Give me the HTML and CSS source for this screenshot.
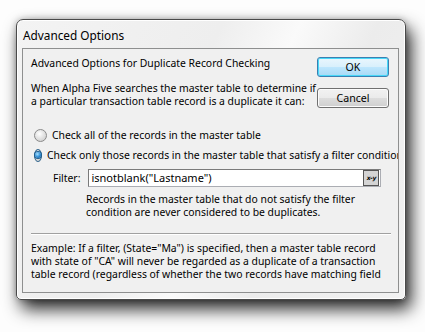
FILE: index.html
```html
<!DOCTYPE html>
<html lang="en">
  <head>
    <meta charset="UTF-8" />
    <title>Advanced Options</title>
    <link rel="stylesheet" href="styles.css">
  </head>
  <body>
    <div class="window">
      <div class="titlebar">Advanced Options</div>
      <div class="panel">
        <div class="top">
          <div class="intro">
            <p class="heading">Advanced Options for Duplicate Record Checking</p>
            <p class="para">When Alpha Five searches the master table to determine if<br>a particular transaction table record is a duplicate it can:</p>
          </div>
          <div class="buttons">
            <button class="btn default">OK</button>
            <button class="btn">Cancel</button>
          </div>
        </div>

        <div class="options">
          <label class="radio-row"><span class="radio"></span>Check all of the records in the master table</label>
          <label class="radio-row"><span class="radio checked"></span>Check only those records in the master table that satisfy a filter condition</label>
        </div>

        <div class="filter-row">
          <span class="filter-label">Filter:</span>
          <div class="filter-box">
            <span class="filter-text">isnotblank("Lastname")</span>
            <span class="xy-btn">x-y</span>
          </div>
        </div>

        <p class="note">Records in the master table that do not satisfy the filter<br>condition are never considered to be duplicates.</p>

        <div class="sep"></div>

        <p class="example">Example: If a filter, (State="Ma") is specified, then a master table record<br>with state of "CA" will never be regarded as a duplicate of a transaction<br>table record (regardless of whether the two records have matching field</p>
      </div>
    </div>
  </body>
</html>
```

FILE: styles.css
```css
html {
  height: 100%;
}

body {
  margin: 0;
  min-height: 100%;
  padding-top: 19px;
  box-sizing: border-box;
  background: #fdfdfd;
  font-family: "Noto Sans", "Open Sans", sans-serif;
  font-size: 10.4px;
  color: #000;
}

p {
  margin: 0;
}

.window {
  margin-left: 16px;
  width: 388px;
  height: 279px;
  border: 1px solid #4a4a4a;
  border-radius: 7px 7px 5px 5px;
  background: linear-gradient(115deg, #f3f3f3 0%, #eeeeee 40%, #fafafa 55%, #ececec 70%, #f2f2f2 100%);
  box-shadow: 5px 9px 17px rgba(0, 0, 0, 0.85), 0 0 6px rgba(0, 0, 0, 0.25), inset 0 0 0 1px #ffffff;
  display: flex;
  flex-direction: column;
  overflow: hidden;
}

.titlebar {
  height: 28px;
  padding-left: 6px;
  font-size: 11.8px;
  line-height: 30px;
  color: #000;
}

.panel {
  margin: 0 6px 6px 5px;
  flex: 1;
  border: 1px solid #8e8f8f;
  background: #f0f0f0;
  padding: 8px 0 0 8px;
  overflow: hidden;
  white-space: nowrap;
}

.top {
  display: flex;
}

.intro {
  flex: 1;
  min-width: 0;
}

.heading {
  line-height: 13px;
}

.para {
  margin-top: 12px;
  line-height: 13px;
}

.buttons {
  flex-shrink: 0;
  display: flex;
  flex-direction: column;
  gap: 11px;
  margin-right: 9px;
}

.btn {
  width: 72px;
  height: 20px;
  padding: 0;
  font-family: inherit;
  font-size: 10.6px;
  color: #000;
  border: 1px solid #707070;
  border-radius: 3px;
  background: linear-gradient(#f2f2f2 0%, #ebebeb 48%, #dddddd 52%, #cfcfcf 100%);
  box-shadow: inset 0 0 0 1px #fcfcfc;
}

.btn.default {
  border-color: #3c7fb1;
  box-shadow: inset 0 0 0 1px #48d8f8;
  background: linear-gradient(#eaf6fd 0%, #d9f0fc 48%, #bee6fd 52%, #a7d9f5 100%);
}

.options {
  margin-top: 17px;
  display: flex;
  flex-direction: column;
}

.radio-row {
  height: 20px;
  display: flex;
  align-items: center;
  gap: 5px;
  padding-left: 3px;
}

.radio {
  width: 11px;
  height: 11px;
  border: 1px solid #8a8a8a;
  border-radius: 50%;
  background: radial-gradient(circle at 40% 35%, #ffffff 0%, #e4e4e4 45%, #c8c8c8 100%);
  box-sizing: content-box;
  display: flex;
  align-items: center;
  justify-content: center;
}

.radio.checked {
  border-color: #2c628b;
}

.radio.checked::after {
  content: "";
  width: 6px;
  height: 6px;
  border-radius: 50%;
  background: radial-gradient(circle at 40% 35%, #a6e1ff 0%, #2a8ad4 55%, #0b4f8a 100%);
  box-shadow: 0 0 0 1px #1f5f90;
}

.filter-row {
  margin-top: 4px;
  display: flex;
  align-items: center;
  gap: 8px;
  padding-left: 22px;
}

.filter-box {
  width: 288px;
  height: 16px;
  display: flex;
  align-items: center;
  justify-content: space-between;
  border: 1px solid #abadb3;
  border-top-color: #7a7a7a;
  border-left-color: #7a7a7a;
  background: #fff;
  padding: 0 1px 0 2px;
}

.filter-text {
  font-size: 11px;
  line-height: 16px;
}

.xy-btn {
  width: 14px;
  height: 14px;
  border: 1px solid #555;
  background: #d4d4d4;
  font-family: "DejaVu Sans", sans-serif;
  font-size: 6px;
  font-weight: bold;
  font-style: italic;
  line-height: 14px;
  text-align: center;
  letter-spacing: -0.3px;
}

.note {
  margin-top: 6px;
  padding-left: 55px;
  line-height: 13px;
}

.sep {
  margin: 14px 7px 0 0;
  height: 0;
  border-top: 1px solid #a0a0a0;
  border-bottom: 1px solid #ffffff;
}

.example {
  margin-top: 7px;
  line-height: 13px;
}
```
